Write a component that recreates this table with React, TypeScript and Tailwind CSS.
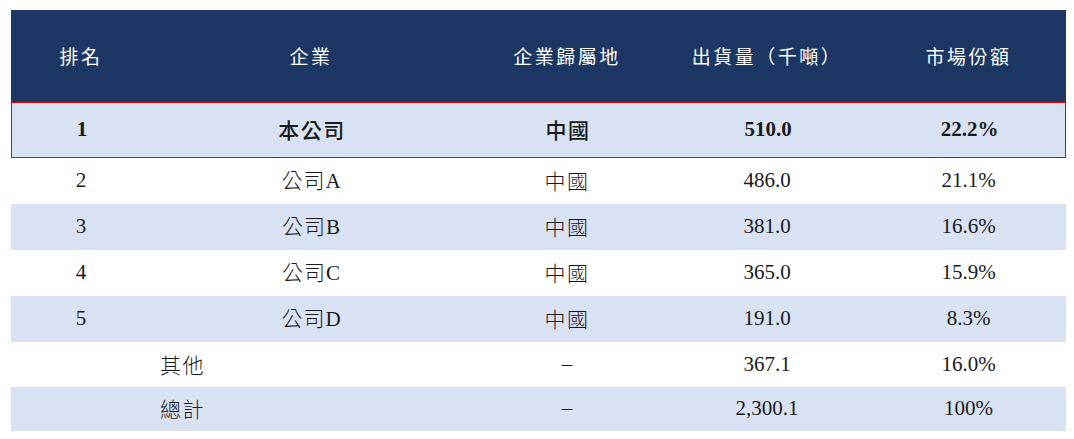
const cols = "grid grid-cols-[140px_320px_192px_208px_195px]";
const cjk = "font-['Noto_Sans_CJK_TC','Noto_Sans_CJK_SC',sans-serif]";
const serif = "font-['Liberation_Serif','Noto_Sans_CJK_TC',serif]";
const lightBlue = "bg-[#d9e2f3]";
const highlight = "border border-red-600 border-[#d2383f]";

const rows = [
  { rank: "2", name: "公司A", place: "中國", qty: "486.0", share: "21.1%", bg: "bg-white" },
  { rank: "3", name: "公司B", place: "中國", qty: "381.0", share: "16.6%", bg: lightBlue },
  { rank: "4", name: "公司C", place: "中國", qty: "365.0", share: "15.9%", bg: "bg-white" },
  { rank: "5", name: "公司D", place: "中國", qty: "191.0", share: "8.3%", bg: lightBlue },
];

function Name({ text }: { text: string }) {
  const cn = text.replace(/[A-Z]/g, "");
  const latin = text.slice(cn.length);
  return (
    <span>
      <span className={`${cjk} font-light tracking-[1px]`}>{cn}</span>
      <span className={serif}>{latin}</span>
    </span>
  );
}

export default function App() {
  return (
    <div className="w-[1074px] h-[439px] bg-white pt-[10px] pl-[11px] text-[#1a1a1a]">
      <div className="w-[1055px]">
        <div className={`${cols} h-[92px] bg-[#1c3764] text-white ${cjk} text-[19px] tracking-[2.5px] items-center text-center`}>
          <div>排名</div>
          <div>企業</div>
          <div>企業歸屬地</div>
          <div>出貨量（千噸）</div>
          <div>市場份額</div>
        </div>

        <div className={`${cols} h-[56px] ${lightBlue} ${highlight} items-center text-center text-[21px]`}>
          <div className={`${serif} font-bold`}>1</div>
          <div className={`${cjk} font-medium tracking-[1.5px]`}>本公司</div>
          <div className={`${cjk} font-medium tracking-[1.5px]`}>中國</div>
          <div className={`${serif} font-bold`}>510.0</div>
          <div className={`${serif} font-bold`}>22.2%</div>
        </div>

        {rows.map((r) => (
          <div key={r.rank} className={`${cols} h-[46px] ${r.bg} items-center text-center text-[21px]`}>
            <div className={serif}>{r.rank}</div>
            <div><Name text={r.name} /></div>
            <div className={`${cjk} font-light tracking-[1.5px]`}>{r.place}</div>
            <div className={serif}>{r.qty}</div>
            <div className={serif}>{r.share}</div>
          </div>
        ))}

        <div className={`${cols} h-[45px] bg-white items-center text-center text-[21px]`}>
          <div className={`col-span-2 text-left pl-[149px] ${cjk} font-light tracking-[1.5px]`}>其他</div>
          <div className={serif}>–</div>
          <div className={serif}>367.1</div>
          <div className={serif}>16.0%</div>
        </div>
        <div className={`${cols} h-[44px] ${lightBlue} items-center text-center text-[21px]`}>
          <div className={`col-span-2 text-left pl-[149px] ${cjk} font-light tracking-[1.5px]`}>總計</div>
          <div className={serif}>–</div>
          <div className={serif}>2,300.1</div>
          <div className={serif}>100%</div>
        </div>
      </div>
    </div>
  );
}
